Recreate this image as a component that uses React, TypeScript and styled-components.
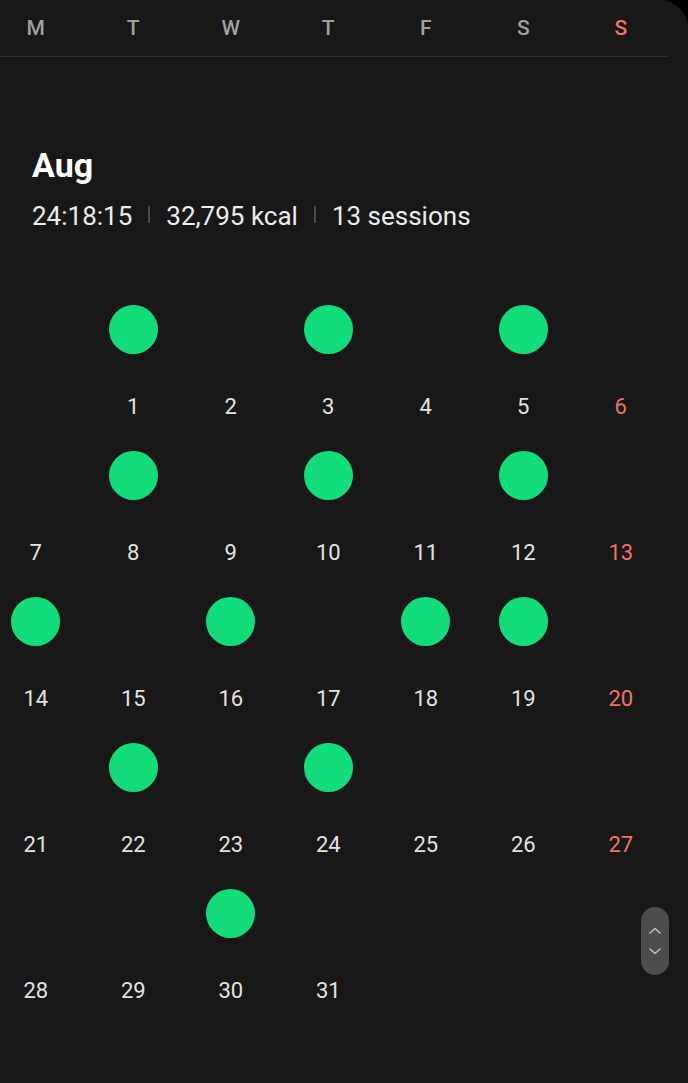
import React from 'react';
import styled, { createGlobalStyle } from 'styled-components';

const GlobalStyle = createGlobalStyle`
	html, body {
		margin: 0;
		padding: 0;
		background: #000;
	}
	body {
		font-family: Roboto, "Noto Sans", "Liberation Sans", sans-serif;
		-webkit-font-smoothing: antialiased;
	}
`;

const WEEKDAYS = ['M', 'T', 'W', 'T', 'F', 'S', 'S'];
const ACTIVE = new Set([1, 3, 5, 8, 10, 12, 14, 16, 18, 19, 22, 24, 30]);
// August starts on a Tuesday
const OFFSET = 1;

const buildWeeks = () => {
	const cells: (number | null)[] = [];
	for (let i = 0; i < OFFSET; i++) cells.push(null);
	for (let d = 1; d <= 31; d++) cells.push(d);
	while (cells.length % 7) cells.push(null);
	const weeks: (number | null)[][] = [];
	for (let i = 0; i < cells.length; i += 7) weeks.push(cells.slice(i, i + 7));
	return weeks;
};

const App = () => {
	const weeks = buildWeeks();
	return (
		<>
			<GlobalStyle />
			<Screen>
				<WeekHeader>
					<Columns>
						{WEEKDAYS.map((d, i) => (
							<Weekday key={i} $sunday={i === 6}>
								{d}
							</Weekday>
						))}
					</Columns>
				</WeekHeader>

				<Month>
					<MonthTitle>Aug</MonthTitle>
					<Stats>
						<span>24:18:15</span>
						<Divider />
						<span>32,795 kcal</span>
						<Divider />
						<span>13 sessions</span>
					</Stats>
				</Month>

				<Weeks>
					{weeks.map((week, wi) => (
						<Columns key={wi}>
							{week.map((day, di) => (
								<DayCell key={di}>
									<Dot $active={day !== null && ACTIVE.has(day)} />
									<DayNumber $sunday={di === 6}>{day ?? ''}</DayNumber>
								</DayCell>
							))}
						</Columns>
					))}
				</Weeks>

				<ScrollPill aria-label="Scroll">
					<svg width="14" height="10" viewBox="0 0 14 10" fill="none">
						<path d="M2 7 L7 2.5 L12 7" stroke="#bdbdbd" strokeWidth="1.6" strokeLinecap="round" strokeLinejoin="round" />
					</svg>
					<svg width="14" height="10" viewBox="0 0 14 10" fill="none">
						<path d="M2 3 L7 7.5 L12 3" stroke="#bdbdbd" strokeWidth="1.6" strokeLinecap="round" strokeLinejoin="round" />
					</svg>
				</ScrollPill>
			</Screen>
		</>
	);
};

export default App;

const Screen = styled.div`
	position: relative;
	width: 688px;
	height: 1083px;
	background: #181818;
	border-top-right-radius: 28px;
	overflow: hidden;
`;

const WeekHeader = styled.div`
	width: 668px;
	height: 57px;
	border-bottom: 1px solid #2f2f2f;
	box-sizing: border-box;
`;

const Columns = styled.div`
	display: grid;
	grid-template-columns: repeat(7, 97.5px);
	margin-left: -13px;
`;

const Weekday = styled.div<{ $sunday?: boolean }>`
	height: 56px;
	display: flex;
	align-items: center;
	justify-content: center;
	box-sizing: border-box;
	font-size: 21px;
	font-weight: 500;
	color: ${(p) => (p.$sunday ? '#f2706a' : '#a0a0a0')};
`;

const Month = styled.div`
	padding: 87px 0 0 32px;
`;

const MonthTitle = styled.div`
	font-size: 34px;
	font-weight: 700;
	line-height: 42px;
	color: #fff;
`;

const Stats = styled.div`
	display: flex;
	align-items: center;
	gap: 16px;
	margin-top: 14px;
	font-size: 26px;
	line-height: 32px;
	color: #ececec;
`;

const Divider = styled.span`
	width: 2px;
	height: 17px;
	background: #4a4a4a;
	margin-top: -4px;
`;

const Weeks = styled.div`
	padding-top: 51px;
`;

const DayCell = styled.div`
	height: 146px;
	display: flex;
	flex-direction: column;
	align-items: center;
	padding-top: 22px;
	box-sizing: border-box;
`;

const Dot = styled.div<{ $active: boolean }>`
	width: 49px;
	height: 49px;
	border-radius: 50%;
	background: ${(p) => (p.$active ? '#12dd7a' : 'transparent')};
`;

const DayNumber = styled.div<{ $sunday?: boolean }>`
	margin-top: 40px;
	font-size: 22px;
	line-height: 26px;
	color: ${(p) => (p.$sunday ? '#f2706a' : '#e2e2e2')};
`;

const ScrollPill = styled.div`
	position: absolute;
	left: 641px;
	top: 907px;
	width: 28px;
	height: 68px;
	border-radius: 14px;
	background: #4d4d4d;
	display: flex;
	flex-direction: column;
	align-items: center;
	justify-content: center;
	gap: 10px;
`;
